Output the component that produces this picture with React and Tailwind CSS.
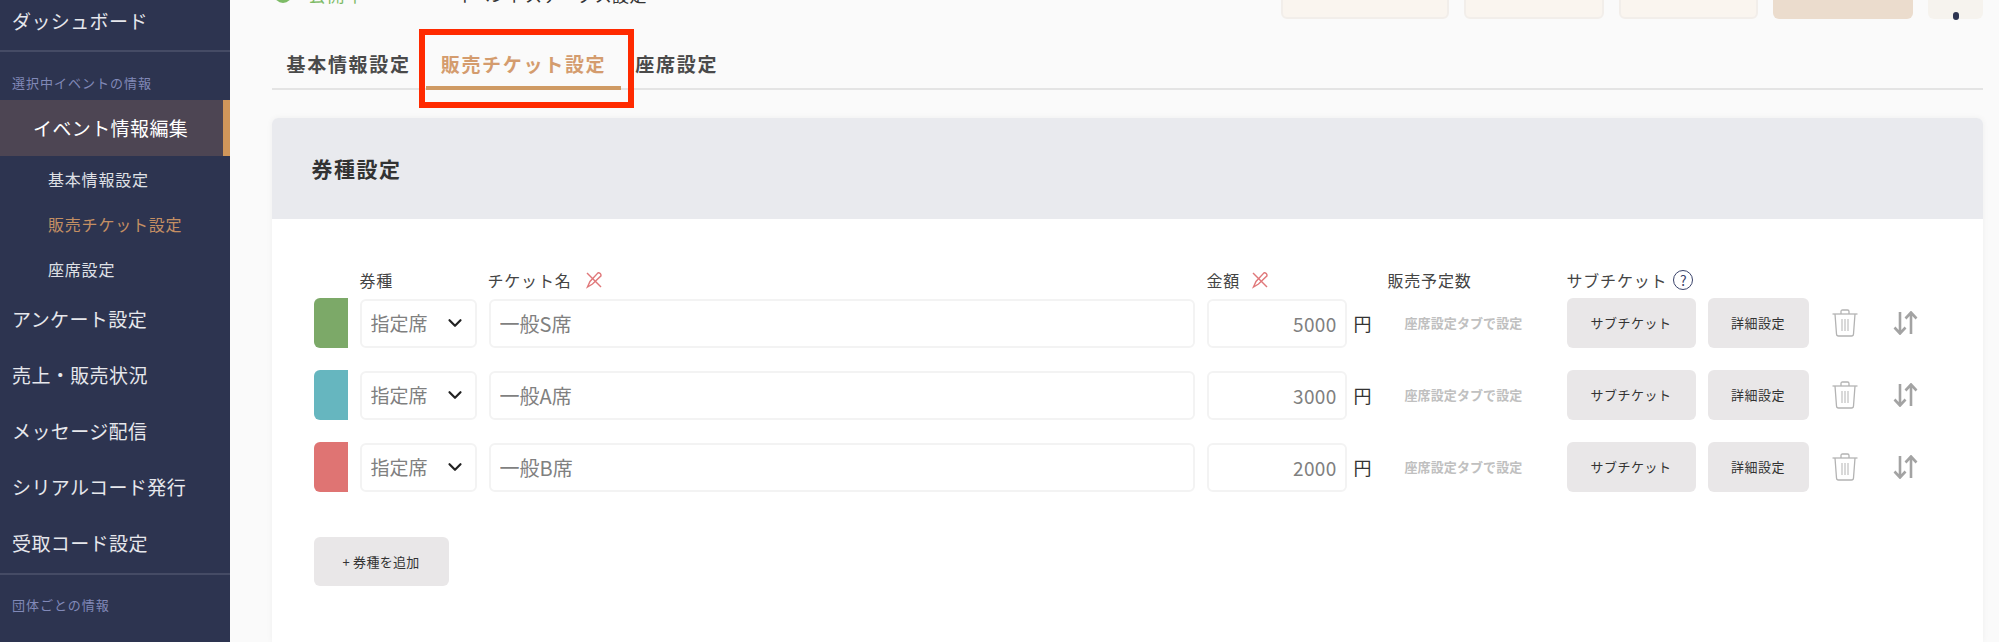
import { ChevronDown } from "lucide-react";

const GRID =
  "grid grid-cols-[34px_117px_706px_140px_17px_167px_129px_101px_48px_49px] gap-x-[12px]";

const tickets = [
  { color: "bg-[#7ca968]", name: "一般S席", price: "5000" },
  { color: "bg-[#66b6bf]", name: "一般A席", price: "3000" },
  { color: "bg-[#df7473]", name: "一般B席", price: "2000" },
];

function NavItem({ children }) {
  return (
    <div className="h-[56px] flex items-center pl-[12px] text-[19px] tracking-[0.4px] text-[#e6e7ec]">
      {children}
    </div>
  );
}

function SubItem({ children, active }) {
  return (
    <div
      className={`h-[45px] flex items-center pl-[48px] text-[16px] tracking-[0.8px] ${
        active ? "text-[#c48f63]" : "text-[#dfe0e6]"
      }`}
    >
      {children}
    </div>
  );
}

function PinOff() {
  return (
    <svg viewBox="0 0 18 18" className="w-[18px] h-[18px]" fill="none" stroke="#e0787a" strokeWidth="1.4">
      <path d="M2 2 L16 16" />
      <path d="M13 1.8 C14.8 1.6 16.2 3 16 4.8 L7.5 13 L2.5 16 L5 10.5 Z" />
    </svg>
  );
}

function Trash() {
  return (
    <svg viewBox="0 0 26 28" className="w-[26px] h-[28px]" fill="none" stroke="#b3b3b3" strokeWidth="1.3">
      <path d="M0.5 5 H25.5" />
      <path d="M9 5 V2.5 Q9 1 10.5 1 H15.5 Q17 1 17 2.5 V5" />
      <path d="M3 5 L4.5 25 Q4.6 27 6.5 27 H19.5 Q21.4 27 21.5 25 L23 5" />
      <path d="M10 10 V22 M13 10 V22 M16 10 V22" strokeWidth="1" />
    </svg>
  );
}

function SortArrows() {
  return (
    <svg viewBox="0 0 25 24" className="w-[25px] h-[24px]" fill="none" stroke="#a3a3a3" strokeWidth="2.6">
      <path d="M7 1 V22 M1.5 16.5 L7 22.5 L12.5 16.5" />
      <path d="M18 23 V2 M12.5 7.5 L18 1.5 L23.5 7.5" />
    </svg>
  );
}

export default function App() {
  return (
    <div className="flex h-[642px] overflow-hidden bg-[#fafafa] font-['Noto_Sans_CJK_JP','Noto_Sans',sans-serif]">
      {/* サイドバー */}
      <aside className="w-[230px] shrink-0 bg-[#2d3450] flex flex-col">
        <div className="h-[52px] border-b-2 border-[#454b65] flex items-center pl-[12px] pb-[8px] text-[19px] tracking-[0.4px] text-[#e6e7ec]">
          ダッシュボード
        </div>
        <div className="h-[48px] flex items-center pl-[12px] pt-[14px] text-[13px] tracking-[1px] text-[#8189b8]">
          選択中イベントの情報
        </div>
        <div className="h-[56px] flex items-center pl-[33px] bg-[#4d4553] border-r-[7px] border-[#d0965a] text-[19px] tracking-[0.4px] text-white">
          イベント情報編集
        </div>
        <div>
          <SubItem>基本情報設定</SubItem>
          <SubItem active>販売チケット設定</SubItem>
          <SubItem>座席設定</SubItem>
        </div>
        <div className="border-b-2 border-[#454b65] pb-[2px]">
          <NavItem>アンケート設定</NavItem>
          <NavItem>売上・販売状況</NavItem>
          <NavItem>メッセージ配信</NavItem>
          <NavItem>シリアルコード発行</NavItem>
          <NavItem>受取コード設定</NavItem>
        </div>
        <div className="pl-[12px] pt-[20px] text-[13px] tracking-[1px] text-[#8189b8]">
          団体ごとの情報
        </div>
      </aside>

      {/* メイン */}
      <main className="flex-1 min-w-0 flex flex-col pl-[41.5px] pr-[16px]">
        <div className="flex justify-between h-[40px] -mt-[21px] shrink-0">
          <div className="flex items-start pt-[3px] pl-[2px] text-[17px]">
            <span className="mt-[3px] w-[18px] h-[18px] rounded-full bg-[#7dbb66]" />
            <span className="ml-[17px] tracking-[2px] text-[#7dbb66]">公開中</span>
            <span className="ml-[90px] tracking-[0.4px] text-[#333]">イベントステータス設定</span>
          </div>
          <div className="flex gap-[15px]">
            <div className="w-[168px] rounded-md border-2 border-[#f2eeea] bg-[#faf5ef]" />
            <div className="w-[140px] rounded-md border-2 border-[#f2eeea] bg-[#faf5ef]" />
            <div className="w-[139px] rounded-md border-2 border-[#f2eeea] bg-[#faf5ef]" />
            <div className="w-[140px] rounded-md bg-[#ebdccd]" />
            <div className="w-[55px] rounded-md bg-[#f6f3ee] flex justify-center items-end">
              <span className="w-[6px] h-[8px] -mb-[1px] rounded-full bg-[#2d3450]" />
            </div>
          </div>
        </div>

        {/* タブ */}
        <div className="mt-[33px] h-[38px] flex border-b-2 border-[#e4e4e4] shrink-0 text-[19px] font-bold tracking-[1.7px]">
          <div className="px-[15px] leading-[24px] text-[#4a4a4a]">基本情報設定</div>
          <div className="relative px-[15px] leading-[24px] text-[#d49c6e] h-[38px] border-b-4 border-[#cf9a63]">
            販売チケット設定
            <div className="absolute -left-[7px] -right-[13px] -top-[23px] h-[79px] border-[6px] border-[#ff2a00]" />
          </div>
          <div className="px-[14px] leading-[24px] text-[#4a4a4a]">座席設定</div>
        </div>

        {/* 券種カード */}
        <section className="mt-[28px] flex-1 bg-white rounded-t-md shadow-[0_0_6px_rgba(0,0,0,0.05)]">
          <div className="h-[101px] rounded-t-md bg-[#e9eaee] flex items-center pl-[40px] text-[21px] font-bold tracking-[1.5px] text-[#333]">
            券種設定
          </div>
          <div className="pl-[42px] pt-[49px]">
            <div className={`${GRID} h-[30px] text-[16px] tracking-[0.8px] text-[#444] leading-[24px]`}>
              <div />
              <div className="h-[24px]">券種</div>
              <div className="flex items-center h-[24px] gap-[13px] -ml-[1px]">
                チケット名
                <PinOff />
              </div>
              <div className="flex items-center h-[24px] gap-[11px]">
                金額
                <PinOff />
              </div>
              <div />
              <div className="h-[24px]">販売予定数</div>
              <div className="col-span-2 flex items-center h-[24px] gap-[6px]">
                サブチケット
                <span className="w-[20px] h-[20px] rounded-full border border-[#39426a] flex items-center justify-center text-[14px] tracking-normal text-[#39426a]">
                  ?
                </span>
              </div>
            </div>

            <div className="flex flex-col gap-[22px]">
              {tickets.map((t) => (
                <div key={t.name} className={`${GRID} h-[50px] items-center`}>
                  <div className={`h-[50px] rounded-l-md ${t.color}`} />
                  <div className="relative h-[49px]">
                    <select className="w-full h-full appearance-none bg-white rounded-md border-2 border-[#f3f3f3] pl-[9px] text-[19px] text-[#808080] outline-none">
                      <option>指定席</option>
                    </select>
                    <ChevronDown
                      size={22}
                      strokeWidth={2.4}
                      className="absolute right-[11px] top-[13px] text-[#222] pointer-events-none"
                    />
                  </div>
                  <input
                    readOnly
                    value={t.name}
                    className="h-[49px] bg-white rounded-md border-2 border-[#f3f3f3] pl-[9px] text-[20px] text-[#808080] outline-none"
                  />
                  <input
                    readOnly
                    value={t.price}
                    className="w-full h-[49px] bg-white rounded-md border-2 border-[#f3f3f3] pr-[8px] text-right text-[19px] tracking-[0.3px] text-[#808080] outline-none"
                  />
                  <div className="-ml-[5px] text-[18px] text-[#333]">円</div>
                  <div className="pl-[17px] text-[13px] font-bold tracking-[0.1px] text-[#c0c0c0] whitespace-nowrap">
                    座席設定タブで設定
                  </div>
                  <button className="h-[50px] rounded-md bg-[#e9e7e8] text-[13px] tracking-[0.5px] text-[#333]">
                    サブチケット
                  </button>
                  <button className="h-[50px] rounded-md bg-[#e9e7e8] text-[13px] tracking-[0.5px] text-[#333]">
                    詳細設定
                  </button>
                  <div className="flex justify-center">
                    <Trash />
                  </div>
                  <div className="flex justify-center">
                    <SortArrows />
                  </div>
                </div>
              ))}
            </div>

            <button className="mt-[45px] w-[135px] h-[49px] rounded-md bg-[#e9e7e8] text-[13px] tracking-[0.3px] text-[#333]">
              + 券種を追加
            </button>
          </div>
        </section>
      </main>
    </div>
  );
}
